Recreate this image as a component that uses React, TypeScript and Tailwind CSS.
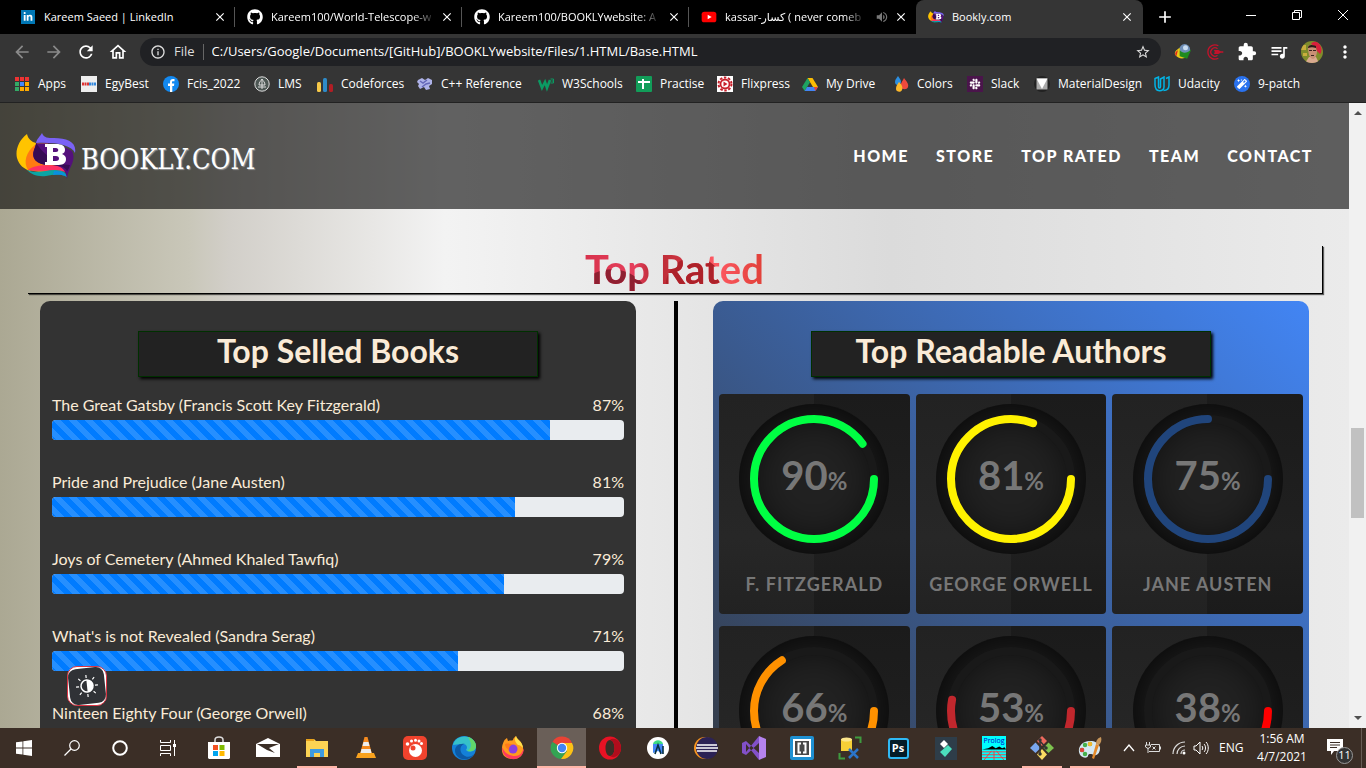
import React from 'react';
import { FaGithub, FaSlack, FaLinkedinIn, FaMagic } from 'react-icons/fa';
import {
  MdAdd, MdArrowBack, MdArrowForward, MdClose, MdExtension, MdInfoOutline, MdMoreVert,
  MdOutlineHome, MdQueueMusic, MdRefresh, MdStarBorder, MdVolumeUp,
} from 'react-icons/md';

type Kids = { children: React.ReactNode };

const Svg = ({ size, box = 24, children }: Kids & { size: string; box?: number }) => (
  <svg className={`${size} shrink-0`} viewBox={`0 0 ${box} ${box}`} fill="none" aria-hidden="true">{children}</svg>
);

const BooklyMark = ({ className }: { className: string }) => (
  <svg className={className} viewBox="0 0 60 46" fill="none" aria-hidden="true">
    <path d="M11 1C3 7-1 17 1 25c2 7 7 11 13 13L32 10H20c-4-1-8-4-9-9z" fill="#ffc400" />
    <path d="M19 12C10 19 7 29 12 37l16 3 16-8-20-20z" fill="#ff7a12" />
    <path d="M12 37c10-7 22-4 34-4 4 0 7 2 6 7-7-4-25-1-40-3z" fill="#ff2f63" />
    <path d="M11 37c10 4 18 0 28 0 8 0 12 3 12 7-8-4-14-2-21-1-9 1-15-2-19-6z" fill="#0aa5a5" />
    <path d="M38 38c8 0 11 2 13 6-5-3-9-2-14-2z" fill="#0a8fe0" />
    <path d="M20 10c8 1 19-2 36 8 5 10-4 17-5 28-1-8-4-14-18-14-13 0-18-7-15-15 1-3 2-5 2-7z" fill="#54107c" />
    <path d="M20 10c7 10 19 22 34 22 0 0-1 4-3 6-2-4-7-6-18-6-13 0-18-7-15-15 1-3 2-5 2-7z" fill="#360b54" />
    <path d="M26 0c2 5 6 5 12 5 13 0 23 4 21 15-3-8-20-11-39-10C21 5 24 4 26 0z" fill="#7a62f5" />
    <path fillRule="evenodd" fill="#fff" d="M29 11h11c6 0 9 2 9 6 0 2-1 3-3 4 3 1 4 3 4 5 0 5-4 6-9 6H29v-3h2V14h-2zM37 15v4h3c3 0 3-4 0-4zM37 23v5h3c4 0 4-5 0-5z" />
  </svg>
);

/* ---------- browser window ---------- */

const Youtube = () => (
  <Svg size="size-4"><rect x="1" y="4" width="22" height="16" rx="4" fill="#f00" /><path d="m10 8.500 6 3.500-6 3.500z" fill="#fff" /></Svg>
);

const tabs = [
  { title: 'Kareem Saeed | LinkedIn', icon: <span className="flex size-3.5 items-center justify-center bg-[#0077b5]"><FaLinkedinIn className="size-2.5" /></span> },
  { title: 'Kareem100/World-Telescope-w', icon: <FaGithub className="size-4" /> },
  { title: 'Kareem100/BOOKLYwebsite: A', icon: <FaGithub className="size-4" /> },
  { title: 'kassar-كسار ( never comeb', icon: <Youtube />, sound: true },
];

const TabStrip = () => (
  <div className="flex h-[34px] shrink-0 bg-black pl-2 text-[11px] text-white">
    {tabs.map((t, i) => (
      <div key={t.title} className="flex w-[227px] items-center pl-3">
        <div className="flex size-4 items-center justify-center">{t.icon}</div>
        <span className={`${t.sound ? 'w-[146px]' : 'w-[168px]'} ml-2 whitespace-nowrap`}>
          <span className={i === 0 ? '' : '[mask-image:linear-gradient(90deg,#000_88%,#0003)]'}>{t.title}</span>
        </span>
        {t.sound && <MdVolumeUp className="mx-1 size-3.5 text-[#777]" />}
        <button aria-label="Close tab" className="ml-px"><MdClose className="size-3.5" /></button>
        <span className={`${i === 3 ? 'bg-transparent' : 'bg-[#555]'} ml-auto h-5 w-px`} />
      </div>
    ))}
    <div className="flex w-[227px] items-center rounded-t-lg bg-[#353535] pl-3">
      <BooklyMark className="size-4" />
      <span className="ml-2 flex-1">Bookly.com</span>
      <button aria-label="Close tab" className="mr-[9px]"><MdClose className="size-3.5" /></button>
    </div>
    <button aria-label="New tab" className="ml-3"><MdAdd className="size-5" /></button>
    <div className="ml-auto flex pb-1">
      <button aria-label="Minimize" className="flex w-[46px] items-center justify-center"><Svg size="size-3" box={12}><path d="M1 6.500h10" stroke="#fff" /></Svg></button>
      <button aria-label="Restore" className="flex w-[46px] items-center justify-center"><Svg size="size-3" box={12}><path d="M1.500 3.500h7v7h-7zM3.500 3.500v-2h7v7h-2" stroke="#fff" /></Svg></button>
      <button aria-label="Close" className="flex w-[46px] items-center justify-center"><Svg size="size-3" box={12}><path d="m1 1 10 10M11 1 1 11" stroke="#fff" /></Svg></button>
    </div>
  </div>
);

const Toolbar = () => (
  <div className="flex h-9 shrink-0 items-center bg-[#353535] pr-[11px] pl-3 text-white">
    <div className="flex gap-3">
      <button aria-label="Back" className="text-[#8a8a8a]"><MdArrowBack className="size-5" /></button>
      <button aria-label="Forward" className="text-[#8a8a8a]"><MdArrowForward className="size-5" /></button>
      <button aria-label="Reload"><MdRefresh className="size-5" /></button>
      <button aria-label="Home"><MdOutlineHome className="size-5" /></button>
    </div>
    <div className="mx-3 flex h-7 flex-1 items-center rounded-full bg-[#202124] px-2.5">
      <MdInfoOutline className="size-4 shrink-0 text-[#ddd]" />
      <span className="ml-2 text-[13px] text-[#ddd]">File</span>
      <span className="mx-2 h-4 w-px bg-[#666]" />
      <input aria-label="Address" readOnly value="C:/Users/Google/Documents/[GitHub]/BOOKLYwebsite/Files/1.HTML/Base.HTML" className="min-w-0 flex-1 bg-transparent text-[13px] outline-none" />
      <MdStarBorder className="size-4 text-[#ddd]" />
    </div>
    <div className="flex items-center gap-3">
      <button aria-label="Download manager"><Svg size="size-5">
        <circle cx="14" cy="9" r="6.500" fill="#6f8fb8" /><circle cx="15" cy="7" r="3" fill="#c9dcf0" />
        <path d="M8 7c-5 3-7 6-5 9 3 4 9 5 14 2-6 0-9-5-9-11z" fill="#e9c918" /><path d="M6 10c-4 2-4 5-2 7 1-3 1-4 2-7z" fill="#d22" />
        <path d="M8 10c4 4 8 4 14-1l-5 11-9-3z" fill="#1f8a1f" />
      </Svg></button>
      <button aria-label="Clipper"><Svg size="size-5"><path d="M16 4.500a8.500 8.500 0 1 0 0 15M15 8a5 5 0 1 0 0 8M11 10.500h5l3 1.500h3M11 13.500h5l3-1.500M12 12h10" stroke="#c4122b" strokeWidth="1.600" /></Svg></button>
      <button aria-label="Extensions"><MdExtension className="size-5" /></button>
      <button aria-label="Media"><MdQueueMusic className="size-5" /></button>
      <button aria-label="Profile"><svg className="size-[22px] rounded-full" viewBox="0 0 22 22" aria-hidden="true">
        <path fill="#7f8c2b" d="M0 0h22v22H0z" /><path fill="#c9ae3c" d="M0 4h5v5H0zM2 12h4v3H2z" />
        <path fill="#d9a98f" d="M8 16 4 22h14l-3-6z" /><path fill="#c98f75" d="M7 6c0-3 8-3 8 1l1 3c0 4-2 8-4 8-3 0-5-5-5-12z" />
        <path fill="#d9203c" d="M10 3c2-3 7-3 9 1 2 3 2 7 0 9l-3-3-1-4z" /><path fill="#2b1a18" d="M7 7c0-3 3-4 8-2v2c-3-1-5-1-8 0z" />
        <path fill="#3b2320" d="M8 9h3v1H8zm4 0h3v1h-3zM10 14h3v1h-3z" />
      </svg></button>
      <button aria-label="Menu"><MdMoreVert className="size-5" /></button>
    </div>
  </div>
);

const I = ({ children, box = 16 }: Kids & { box?: number }) => <Svg size="size-4" box={box}>{children}</Svg>;

const bookmarks = [
  { w: 'w-[67px]', label: 'Apps', icon: <I>{['#e33', '#e33', '#e33', '#3a6', '#48f', '#fa0', '#3a6', '#fa0', '#fa0'].map((c, i) => <rect key={i} x={1 + (i % 3) * 5} y={1 + Math.floor(i / 3) * 5} width="4" height="4" fill={c} />)}</I> },
  { w: 'w-[82px]', label: 'EgyBest', icon: <I><path d="M0 0h16v16H0z" fill="#eee" /><path d="M1 8h7" stroke="#d33" strokeWidth="3" strokeDasharray="2 .5" /><path d="M8 8h7" stroke="#38d" strokeWidth="3" strokeDasharray="2 .5" /></I> },
  { w: 'w-[91px]', label: 'Fcis_2022', icon: <I><circle cx="8" cy="8" r="8" fill="#1389f0" /><path d="M7 16V10H5V7.500h2V6c0-2 1-3 3-3h1.500v2.300H10c-1 0-1 .5-1 1v1.200h2.300L11 10H9.300v6z" fill="#fff" /></I> },
  { w: 'w-[63px]', label: 'LMS', icon: <I><circle cx="8" cy="8" r="7.200" fill="#4d5754" stroke="#ddd" /><path d="M8 3v10M5 9c0-3 2-4 3-6 1 2 3 3 3 6zM4 11h8" stroke="#ddd" /></I> },
  { w: 'w-[100px]', label: 'Codeforces', icon: <I><rect y="6" width="4" height="10" rx="1.500" fill="#f7c948" /><rect x="6" y="2" width="4" height="14" rx="1.500" fill="#2e8bc9" /><rect x="12" y="8" width="4" height="8" rx="1.500" fill="#b11e25" /></I> },
  { w: 'w-[121px]', label: 'C++ Reference', icon: <I><path d="m1 4 4-2 3 2 3-2 4 2v4l-3 2 1 3-4 1-2-3-4 2-2-3 1-2-2-2z" fill="#aeb2e8" /><path d="m3 5 3 2 4-3M5 11l4-3 4-1" stroke="#6467b8" strokeWidth="1.500" /></I> },
  { w: 'w-[98px]', label: 'W3Schools', icon: <I><path d="m1 4 3 8 3-6 2 6 3-8" stroke="#0b9a63" strokeWidth="2.500" /><path d="M12.500 3h3v4h-3m1-2h2" stroke="#0b9a63" /></I> },
  { w: 'w-[81px]', label: 'Practise', icon: <I><rect width="16" height="16" rx="1" fill="#129d59" /><path d="M2 6h12M7 3v10" stroke="#fff" strokeWidth="2" /></I> },
  { w: 'w-[85px]', label: 'Flixpress', icon: <I><path d="M0 0h16v16H0z" fill="#fff" /><circle cx="8" cy="8" r="6.500" stroke="#c8202b" strokeWidth="2" strokeDasharray="2.500 1.600" /><circle cx="8" cy="8" r="4.500" stroke="#c8202b" strokeWidth="1.800" /><path d="m6.500 5.500 4 2.500-4 2.500z" fill="#c8202b" /></I> },
  { w: 'w-[91px]', label: 'My Drive', icon: <I><path d="M5.500 2h5L16 11h-5z" fill="#fbbc04" /><path d="M5.500 2 8 6.300 2.700 15 0 11z" fill="#1ea362" /><path d="M5 11h11l-2.700 4H2.700z" fill="#4285f4" /><path d="M12 11h4l-2.700 4z" fill="#ea4335" /></I> },
  { w: 'w-[74px]', label: 'Colors', icon: <I><path d="M5 0c3 4 4 6 2 8S2 9 2 6s2-4 3-6z" fill="#2d8fe0" /><path d="M11 2c3 4 5 6 4 9s-6 3-7 0 1-5 3-9z" fill="#ef4a3e" /><path d="M6 6c3 3 4 5 3 8s-6 2-6-1 1-4 3-7z" fill="#fdb82a" /></I> },
  { w: 'w-[67px]', label: 'Slack', icon: <span className="flex size-4 items-center justify-center bg-[#4a154b]"><FaSlack className="size-3" /></span> },
  { w: 'w-[120px]', label: 'MaterialDesign', icon: <I><circle cx="8" cy="8" r="8" fill="#222" /><path d="M2.500 2.500h11v11h-11z" fill="#aaa" /><path d="M2.500 2.500h11L8 13z" fill="#fff" /></I> },
  { w: 'w-[80px]', label: 'Udacity', icon: <I><path d="M1 2.500v6C1 17 10 16 10 11V1L6.500 3v7.500c0 2-2 2-2 0V1zM9.500 14.500C14 14.500 15 12 15 9V1l-3 1.500" stroke="#02b3e4" strokeWidth="1.500" /></I> },
  { w: 'w-[80px]', label: '9-patch', icon: <span className="flex size-4 items-center justify-center rounded-full bg-[#2a72ee]"><FaMagic className="size-2.5" /></span> },
];

const Bookmarks = () => (
  <nav aria-label="Bookmarks" className="flex h-[33px] shrink-0 items-center overflow-hidden border-b border-[#222] bg-[#353535] pb-1 pl-[14px] text-white">
    {bookmarks.map((b) => (
      <a key={b.label} href="#" className={`${b.w} flex shrink-0 items-center gap-2 whitespace-nowrap`}>{b.icon}{b.label}</a>
    ))}
  </nav>
);

/* ---------- web page ---------- */

const books = [
  { title: 'The Great Gatsby (Francis Scott Key Fitzgerald)', pct: 87 },
  { title: 'Pride and Prejudice (Jane Austen)', pct: 81 },
  { title: 'Joys of Cemetery (Ahmed Khaled Tawfiq)', pct: 79 },
  { title: "What's is not Revealed (Sandra Serag)", pct: 71 },
  { title: 'Ninteen Eighty Four (George Orwell)', pct: 68 },
];

const authors: { name?: string; pct: number; color: string }[] = [
  { name: 'F. Fitzgerald', pct: 90, color: '#00ff43' },
  { name: 'George Orwell', pct: 81, color: '#fff200' },
  { name: 'Jane Austen', pct: 75, color: '#20457c' },
  { pct: 66, color: '#ff9100' },
  { pct: 53, color: '#c1272d' },
  { pct: 38, color: '#ff0000' },
];

const CardTitle = ({ children }: Kids) => (
  <div className="px-3">
    <h2 className="mx-auto h-[46px] w-[70%] border border-[#003000] bg-[#222] text-center text-[32px] leading-[38px] font-bold text-[#faebd7] shadow-[2px_2px_3px_#000]">{children}</h2>
  </div>
);

const Ring = ({ pct, color }: { pct: number; color: string }) => (
  <div className="grid size-[150px] place-items-center rounded-full bg-[#222] shadow-[inset_0_0_50px_#000]">
    <svg className="size-[150px] [grid-area:1/1]" viewBox="0 0 150 150" fill="none" strokeWidth="8" strokeLinecap="round" aria-hidden="true">
      <circle cx="75" cy="75" r="60" stroke="#191919" />
      <circle cx="75" cy="75" r="60" stroke={color} pathLength="100" strokeDasharray={`${pct} 100`} />
    </svg>
    <p className="pb-1.5 text-[40px] leading-none font-bold text-[#777] [grid-area:1/1]">{pct}<span className="text-2xl">%</span></p>
  </div>
);

const Page = () => (
  <div className="flex min-h-0 flex-1">
    <div className="min-w-0 flex-1 overflow-hidden bg-[linear-gradient(90deg,#aba893_0%,#c9c7b9_14%,#d2cfc9_17%,#f3f3f3_33%,#dbdbdb_66%,#ebebeb_100%)] font-[Lato,sans-serif] text-base">
      <header className="flex h-[106px] items-center bg-black/60 pr-9 pl-4 text-white">
        <a href="#" className="flex items-end gap-[5px]">
          <BooklyMark className="h-[46px] w-[60px]" />
          <span className="pb-1.5 font-['DejaVu_Serif_Condensed','DejaVu_Serif',serif] text-[27px] leading-none [text-shadow:1px_1px_1px_#999]">BOOKLY.COM</span>
        </a>
        <nav className="ml-auto flex gap-[27px] text-base font-black tracking-[1.5px]">
          {['HOME', 'STORE', 'TOP RATED', 'TEAM', 'CONTACT'].map((n) => <a key={n} href="#">{n}</a>)}
        </nav>
      </header>
      <main>
        <h1 className="mx-[27px] mt-9 h-12 text-center text-[40px] leading-[48px] font-bold shadow-[1px_1px_0_#000,2px_2px_1px_#0009]">
          <span className="bg-[radial-gradient(circle_at_15%_135%,#8f2031_0_40px,transparent_41px),radial-gradient(circle_at_61%_85%,#ad2129_0_28px,transparent_29px),linear-gradient(90deg,#d8334d,#e63f5c_28%,#b82a34_38%,#cf3542_55%,#ff5a64_72%,#e04038)] bg-clip-text text-transparent">Top Rated</span>
        </h1>
        <div className="mt-2 flex px-10">
          <section className="min-w-0 flex-1 rounded-[10px] bg-[#333] pt-[30px]">
            <CardTitle>Top Selled Books</CardTitle>
            <ul className="mt-4 px-3">
              {books.map((b) => (
                <li key={b.title} className="mb-[30px] text-[#faebd7]">
                  <div className="flex h-6 justify-between leading-6"><span>{b.title}</span><span>{b.pct}%</span></div>
                  <div role="progressbar" aria-label={b.title} aria-valuenow={b.pct} className="mt-[3px] h-5 overflow-hidden rounded bg-[#e9ecef]">
                    <div className="h-full bg-[#007bff] bg-[linear-gradient(45deg,#ffffff26_25%,transparent_25%,transparent_50%,#ffffff26_50%,#ffffff26_75%,transparent_75%)] bg-[length:16px_16px]" style={{ width: `${b.pct}%` }} />
                  </div>
                </li>
              ))}
            </ul>
          </section>
          <div className="mr-[35px] ml-[38px] w-1 bg-black" />
          <section className="min-w-0 flex-1 rounded-[10px] bg-[linear-gradient(45deg,#333,#4285f4)] pt-[30px] pb-10">
            <CardTitle>Top Readable Authors</CardTitle>
            <ul className="mt-[17px] grid grid-cols-3 gap-x-1.5 gap-y-3 px-1.5">
              {authors.map((a) => (
                <li key={a.pct} className="flex h-[220px] flex-col items-center rounded bg-[linear-gradient(90deg,#ffffff08_50%,transparent_50%),linear-gradient(#1b1b1b,#202020_65%,#1b1b1b)] pt-2.5">
                  <Ring pct={a.pct} color={a.color} />
                  {a.name && <h3 className="mt-[18px] text-lg leading-6 font-bold tracking-[1px] whitespace-nowrap text-[#777] uppercase">{a.name}</h3>}
                </li>
              ))}
            </ul>
          </section>
        </div>
      </main>
    </div>
    <div className="flex w-[17px] shrink-0 flex-col items-center bg-[#f1f1f1] py-1.5">
      <Svg size="size-2" box={8}><path d="m0 6 4-4 4 4z" fill="#505050" /></Svg>
      <div className="min-h-0 flex-[311]" />
      <div className="h-[90px] w-[13px] bg-[#c1c1c1]" />
      <div className="min-h-0 flex-[196]" />
      <Svg size="size-2" box={8}><path d="m0 2 4 4 4-4z" fill="#505050" /></Svg>
    </div>
    <button aria-label="Toggle theme" className="fixed bottom-[62px] left-[67px] flex size-10 items-center justify-center rounded-[10px] border border-[#dc3545] bg-white">
      <span className="flex size-9 -rotate-6 items-center justify-center rounded-lg bg-[#303236]">
        <Svg size="size-6">
          <circle cx="12" cy="12" r="6" stroke="#fff" strokeWidth="1.500" /><path d="M12 6a6 6 0 0 1 0 12z" fill="#fff" />
          <path d="M12 1v3M12 20v3M1 12h3M20 12h3M4 4l2 2M18 18l2 2M4 20l2-2M18 6l2-2" stroke="#fff" strokeWidth="1.200" />
        </Svg>
      </span>
    </button>
  </div>
);

/* ---------- taskbar ---------- */

const T = ({ children }: Kids) => <Svg size="size-6">{children}</Svg>;

const system = [
  { name: 'Start', icon: <Svg size="size-4" box={16}><path d="m0 2.300 6.500-.9v6.200H0zM7.300 1.300 16 0v7.600H7.300zM0 8.400h6.500v6.200L0 13.700zM7.300 8.400H16V16l-8.700-1.300z" fill="#fff" /></Svg> },
  { name: 'Search', icon: <Svg size="size-4" box={16}><circle cx="10.500" cy="5.500" r="4.800" stroke="#fff" strokeWidth="1.200" /><path d="M7 9 .5 15.500" stroke="#fff" strokeWidth="1.200" /></Svg> },
  { name: 'Cortana', icon: <Svg size="size-4" box={16}><circle cx="8" cy="8" r="6.800" stroke="#fff" strokeWidth="2" /></Svg> },
  { name: 'Task view', icon: <Svg size="size-4" box={16}><path d="M.5 0v2.500h10V0M.5 5.500h10v5H.5zM.5 16v-2.500h10V16M14.500 0v16" stroke="#fff" /><path d="M13 4h3v3h-3z" fill="#fff" /></Svg> },
];

type AppItem = { name: string; icon: React.ReactNode; open?: boolean; active?: boolean };

const pinned: AppItem[] = [
  { name: 'Store', icon: <T><path d="M8 6V4c0-4 8-4 8 0v2" stroke="#ddd" strokeWidth="1.500" /><path d="M1 6h22v16l-1 1H2l-1-1z" fill="#fff" /><path d="M6 9h5v5H6z" fill="#f25022" /><path d="M12.500 9h5v5h-5z" fill="#7fba00" /><path d="M6 15h5v5H6z" fill="#00a4ef" /><path d="M12.500 15h5v5h-5z" fill="#ffb900" /></T> },
  { name: 'Mail', icon: <T><path d="M0 8 12 2l12 6v13H0z" fill="#fff" /><path d="m1 8 22 0-10 4 6 5-8-3z" fill="#3b2e26" /></T> },
  { name: 'File Explorer', open: true, icon: <T><path d="M1 3h8l2 2h12v16H1z" fill="#fcd354" /><path d="M1 3h8v2H1z" fill="#e9a21b" /><path d="M5 13h14v8h-4v-4H9v4H5z" fill="#3d9be0" /></T> },
  { name: 'VLC', icon: <T><path d="M10.500 1h3L18 18H6z" fill="#f58a1f" /><path d="M9.500 6h5l1 4h-7zM7.500 13h9l1 4h-11z" fill="#eee" /><path d="M4 17h16l2 5H2z" fill="#f9a21e" /></T> },
  { name: 'GOM Player', icon: <T><rect width="24" height="24" rx="5" fill="#f0432d" /><circle cx="12.500" cy="14.500" r="6.500" fill="#fff" /><circle cx="10" cy="12" r="2.500" fill="#f0432d" /><path d="M4.500 8h.01" stroke="#fff" strokeWidth="3.600" strokeLinecap="round" /><path d="M8.500 5h.01M12.500 4.200h.01M16 5h.01M18.500 7.500h.01" stroke="#fff" strokeWidth="3" strokeLinecap="round" /></T> },
  { name: 'Edge', icon: <T><circle cx="12" cy="12" r="12" fill="#1480d8" /><path d="M1 9C4-3 23-2 24 10c0 6-7 7-10 4 2-2 1-6-3-6-5 0-8 1-10 1z" fill="#35c1c9" /><path d="M16 1c6 2 8 6 8 9 0 5-6 6-9 5 6-3 4-9 1-14z" fill="#61d86b" /><path d="M13 8c-5 0-7 9 0 12 4 2 7 0 9-2-4 8-18 7-19-3 0-5 4-8 10-7z" fill="#0c59a4" /></T> },
  { name: 'Firefox', icon: <T><path d="M3 5c1-2 2-2 3-3l1 3c2-1 4 0 5-1 0-2 2-3 3-4 1 3 3 4 4 5 5 6 5 18-7 18S-1 13 3 5z" fill="#ff9a1f" /><path d="M1 11c0 16 22 16 22 1-2 5-4 8-9 8S4 18 1 11z" fill="#ff3a5e" /><path d="M15 0c1 4 7 6 7 12-2-2-3-3-5-3-3-3-4-6-2-9z" fill="#ffe04a" /><circle cx="12" cy="13" r="4.500" fill="#8a3fe0" /><path d="M4 8c3-1 5 0 8 1-3 0-4 2-4 5-2-1-4-3-4-6z" fill="#ff7a1a" /></T> },
  { name: 'Chrome', open: true, active: true, icon: <T><path d="M12 12 2.500 6A11 11 0 0 1 22 7z" fill="#e94335" /><path d="M12 12 2.400 6A11 11 0 0 0 11 23l6-8z" fill="#34a353" /><path d="M12 12V7h10A11 11 0 0 1 11 23l6-8z" fill="#fbc116" /><circle cx="12" cy="12" r="5.200" fill="#fff" /><circle cx="12" cy="12" r="4.200" fill="#4285f4" /></T> },
];

const tools: AppItem[] = [
  { name: 'Opera', icon: <T><path fillRule="evenodd" d="M12 .5a11 11.500 0 1 0 0 23 11 11.500 0 1 0 0-23zm0 3.500c3 0 4.500 4 4.500 8s-1.500 8-4.500 8-4.500-4-4.500-8S9 4 12 4z" fill="#e81224" /><path d="M12 4c3-3 11 0 11 8s-8 11-11 8c3 0 4.500-4 4.500-8S15 4 12 4z" fill="#b00d1c" /></T> },
  { name: 'Android Studio', icon: <T><circle cx="12" cy="12" r="11" fill="#fff" /><path d="M7 8c1-5 9-5 10 0z" fill="#3ddc84" /><path d="M7 8h10v10l-5-3-5 2z" fill="#4285f4" /><path d="m9 18 3-9 3 9M17 10v8" stroke="#073042" strokeWidth="1.600" /></T> },
  { name: 'Eclipse', icon: <T><circle cx="11" cy="12" r="11" fill="#f7941e" /><circle cx="13" cy="12" r="11" fill="#2c2255" /><path d="M3 9h20M2 12h22M3 15h20" stroke="#fff" strokeWidth="1.600" /></T> },
  { name: 'Visual Studio', icon: <T><path d="m17 0 7 3v18l-7 3z" fill="#b583ee" /><path d="M17 0v7L4 19l-4-2V7l4-2 13 12v7L4 8v8z" fill="#8250c8" fillRule="evenodd" /></T> },
  { name: 'Brackets', icon: <T><rect width="24" height="24" rx="2" fill="#1e90d2" /><path d="M3 3h18v18H3z" fill="#fff" /><path d="M5 5h14v14H5z" fill="#484848" /><path d="M11 7.500H8.500v9H11M13 7.500h2.500v9H13" stroke="#fff" strokeWidth="2" /></T> },
  { name: 'SQL Developer', icon: <T><path d="M3 3h11v12H3z" fill="#f6cf37" /><ellipse cx="8.500" cy="3.500" rx="5.500" ry="2" fill="#fbe58b" /><path d="M17 1.500h5.500V7M7 22.500H1.500V17" stroke="#3f9b3f" strokeWidth="2" /><path d="m11 13 9 9M20 13l-9 9" stroke="#2b74c9" strokeWidth="2.500" /></T> },
  { name: 'Photoshop', icon: <span className="flex h-[21px] w-[21px] items-center justify-center rounded-[3px] border-2 border-[#2fb9f5] bg-[#041c28] text-[11px] font-bold text-white">Ps</span> },
  { name: 'Filmora', icon: <T><path d="M1 1h22v23H1z" fill="#2e3d49" /><path d="m10 4 4 4-4 4-4-4z" fill="#fff" /><path d="m14 9 4 4-7 8-5-5z" fill="#4be0bd" /></T> },
  { name: 'Prolog', icon: <span className="flex size-6 flex-col overflow-hidden bg-[#00ffff] text-center text-[7px] leading-[10px] text-[#00c]">Prolog<Svg size="h-3.5 w-6"><path d="M-9 6h42l-3-4-4 2-5-3-6 3-6-4-7 4z" fill="#000" /><path d="M-9 10h42M-9 15h42M-9 20h42M8 8-5 24M16 8l13 16M12 8v16" stroke="#f33" strokeWidth="1.500" /></Svg></span> },
  { name: 'Git Bash', open: true, icon: <T><path d="m12 0 5 5-5 5-5-5z" fill="#ef6a5e" /><path d="m5.500 6.500 5 5.500-5 5L0 12z" fill="#7aa7f0" /><path d="m18.500 6.500 5.500 5.500-5.500 5-5-5z" fill="#7ec34f" /><path d="m12 13 5 5.500-5 5.500-5-5.500z" fill="#fbdc63" /><path d="M10 4v14M10 5l6 7" stroke="#333" strokeWidth="1.500" /><path d="M10 4h.01M10 18h.01M16 12h.01" stroke="#333" strokeWidth="3.500" strokeLinecap="round" /></T> },
  { name: 'Paint', open: true, icon: <T><path d="M14 5C5 4 0 10 1 16c1 6 8 7 9 4 0-3 4-2 6-1 4 1 6-3 6-7 0-3-4-7-8-7z" fill="#d5e8f3" /><path d="M4 14h.01M7 9h.01M12 8h.01M7 18h.01" strokeWidth="4.500" strokeLinecap="round" stroke="#45b04c" /><path d="M4 14h.01" strokeWidth="4.500" strokeLinecap="round" stroke="#e0443a" /><path d="M12 8h.01" strokeWidth="4.500" strokeLinecap="round" stroke="#f5b82e" /><path d="m14 22 4-14 3 1-5 14z" fill="#e58a2b" /><path d="M18 8c0-4 2-6 5-7 1 3 0 6-2 8z" fill="#c8965a" /></T> },
];

const AppButton = ({ app, width }: { app: AppItem; width: string }) => (
  <button aria-label={app.name} className={`${app.active ? 'bg-[#6a5f58]' : ''} ${width} flex shrink-0 flex-col items-center`}>
    <span className="flex flex-1 items-center">{app.icon}</span>
    <span className={`${app.active ? 'w-full bg-[#ffb5a8]' : app.open ? 'w-10 bg-[#ffb5a8]' : 'w-10'} -mt-[2px] h-[2px]`} />
  </button>
);

const Taskbar = () => (
  <footer className="flex h-10 shrink-0 overflow-hidden bg-[#3b2e26] text-white">
    {system.map((s) => <button key={s.name} aria-label={s.name} className="flex w-12 shrink-0 items-center justify-center">{s.icon}</button>)}
    <div className="ml-[2px] flex">
      {pinned.map((a) => <AppButton key={a.name} app={a} width="w-[49px]" />)}
      {tools.map((a) => <AppButton key={a.name} app={a} width="w-12" />)}
    </div>
    <div className="ml-auto flex items-center">
      <button aria-label="Hidden icons" className="mr-2.5"><Svg size="size-3" box={12}><path d="m1 9 5-6 5 6" stroke="#fff" strokeWidth="1.300" /></Svg></button>
      <Svg size="size-4" box={16}><path d="M6 4.500h8.500v7H4M15.500 6.500v3M7.500 6.500l3 3M10.500 6.500l-3 3M1.500 2v3M4.500 2v3M.5 5h5v2L3 8.500.5 7zM3 8v5" stroke="#ddd" /></Svg>
      <span className="w-2.5" />
      <Svg size="size-4" box={16}><path d="M2 14A12 12 0 0 1 14 2M6 14a8 8 0 0 1 8-8M10 14a4 4 0 0 1 4-4" stroke="#ddd" strokeWidth="1.200" /><circle cx="13" cy="13" r="1.500" fill="#fff" /></Svg>
      <span className="w-1.5" />
      <Svg size="size-4" box={16}><path d="M1 6h2l4-4v12l-4-4H1zM9 6c1 1 1 3 0 4M11 4c2 2 2 6 0 8M13 2c3 3 3 9 0 12" stroke="#fff" /></Svg>
      <span className="mr-4 ml-2.5 w-6">ENG</span>
      <time className="flex w-[46px] flex-col items-center leading-[18px] whitespace-nowrap"><span>1:56 AM</span><span>4/7/2021</span></time>
      <button aria-label="Notifications" className="relative mr-2.5 ml-[22px]">
        <Svg size="size-6"><path d="M0 3h16v12H7l-3 4v-4H0z" fill="#fff" /><path d="M3 6.500h10M3 9h10M3 11.500h7" stroke="#3b2e26" /></Svg>
        <span className="absolute -right-0.5 -bottom-1 flex size-[17px] items-center justify-center rounded-full border border-[#999] bg-[#333] text-[11px]">11</span>
      </button>
      <span className="h-10 w-[5px] border-l border-[#665c55]" />
    </div>
  </footer>
);

export default function App() {
  return (
    <div className="flex h-screen flex-col overflow-hidden font-['Open_Sans','Noto_Sans','DejaVu_Sans',sans-serif] text-xs">
      <TabStrip />
      <Toolbar />
      <Bookmarks />
      <Page />
      <Taskbar />
    </div>
  );
}
